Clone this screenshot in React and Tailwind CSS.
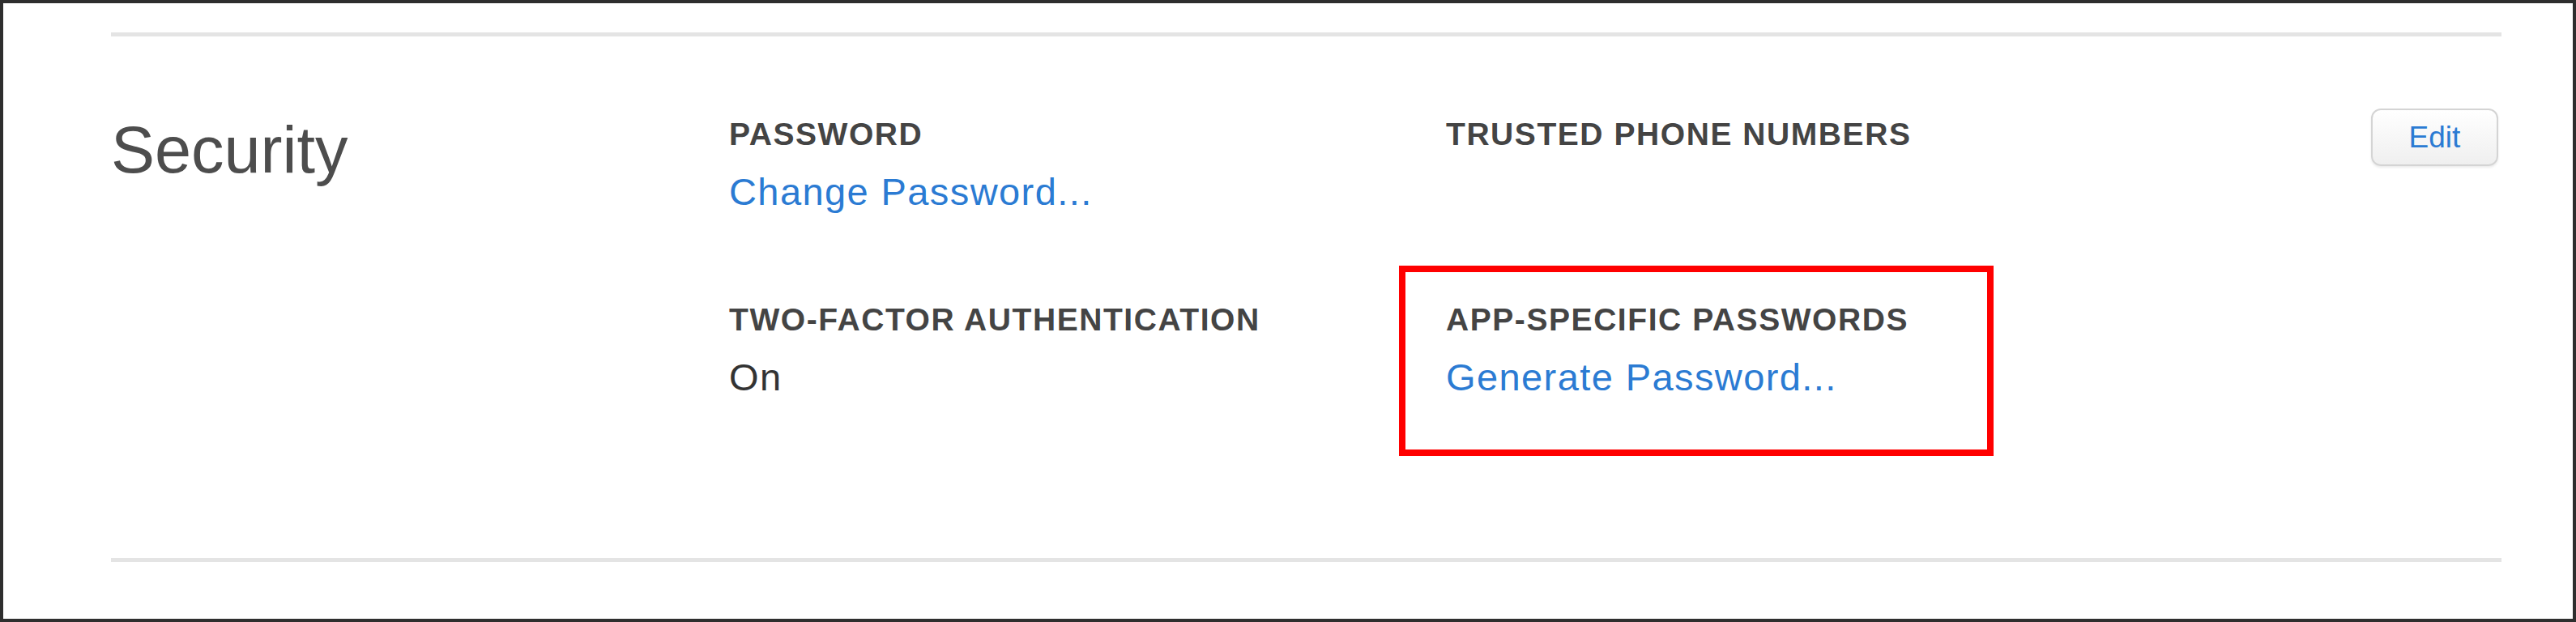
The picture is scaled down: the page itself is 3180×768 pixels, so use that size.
export default function App() {
  const font = { fontFamily: '"Liberation Sans", Arial, sans-serif' };
  return (
    <div
      className="w-[3180px] h-[768px] border-[4px] border-[#2e2e2e] bg-white pl-[133px] pr-[88px] pt-[36px] box-border"
      style={font}
    >
      <div className="h-[5px] bg-[#e4e4e4]" />
      <div className="h-[644px] flex items-start pt-[89px]">
        <div className="w-[763px] mt-[11px]">
          <h2 className="text-[81px] leading-none text-[#4d4d4d] font-normal">Security</h2>
        </div>
        <div className="w-[885px] mt-[12px] flex flex-col">
          <div>
            <div className="text-[39px] leading-[39px] font-bold tracking-[0.04em] text-[#444444]">PASSWORD</div>
            <div className="mt-[28px] text-[47px] leading-[47px] tracking-[0.03em] text-[#2b7bd3]">Change Password...</div>
          </div>
          <div className="mt-[115px]">
            <div className="text-[39px] leading-[39px] font-bold tracking-[0.04em] text-[#444444]">TWO-FACTOR AUTHENTICATION</div>
            <div className="mt-[28px] text-[47px] leading-[47px] tracking-[0.03em] text-[#333333]">On</div>
          </div>
        </div>
        <div className="flex-1 mt-[12px] flex flex-col">
          <div className="h-[114px]">
            <div className="text-[39px] leading-[39px] font-bold tracking-[0.04em] text-[#444444]">TRUSTED PHONE NUMBERS</div>
          </div>
          <div className="mt-[115px] relative">
            <div className="absolute left-[-58px] top-[-47px] w-[734px] h-[235px] border-[8px] border-[#ff0000] box-border pointer-events-none" />
            <div className="text-[39px] leading-[39px] font-bold tracking-[0.04em] text-[#444444]">APP-SPECIFIC PASSWORDS</div>
            <div className="mt-[28px] text-[47px] leading-[47px] tracking-[0.03em] text-[#2b7bd3]">Generate Password...</div>
          </div>
        </div>
        <button className="w-[157px] h-[71px] mr-[4px] rounded-[12px] border-[2px] border-[#d4d4d4] bg-gradient-to-b from-white to-[#efefef] shadow-[0_2px_3px_rgba(0,0,0,0.08)] text-[37px] text-[#2b7bd3] flex items-center justify-center">
          Edit
        </button>
      </div>
      <div className="h-[5px] bg-[#e4e4e4]" />
    </div>
  );
}
